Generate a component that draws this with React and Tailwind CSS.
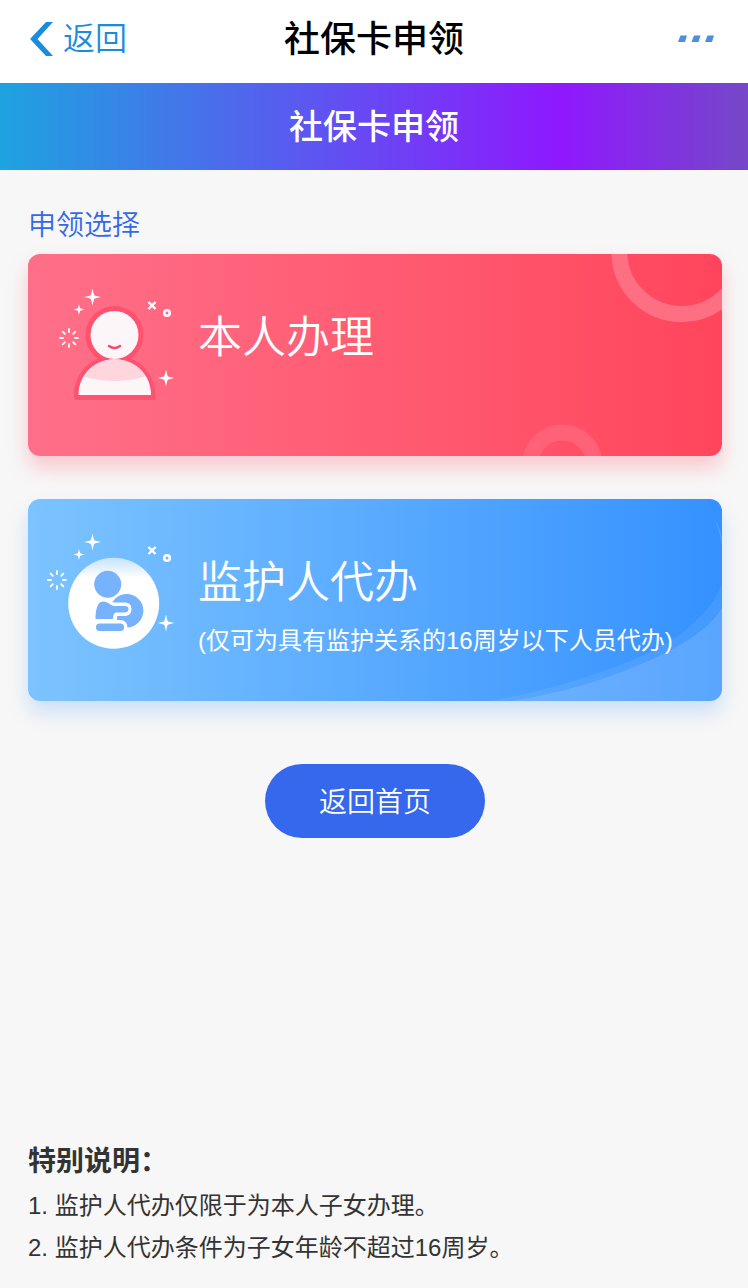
import React from 'react'

const notes = [
  '监护人代办仅限于为本人子女办理。',
  '监护人代办条件为子女年龄不超过16周岁。',
]

// Four-pointed star centred on (x, y)
function Star({ x, y, r }) {
  const k = r * 0.22
  return (
    <path
      transform={`translate(${x} ${y})`}
      d={`M0 ${-r} Q${k * 0.6} ${-k * 1.6} ${k} ${-k} Q${k * 1.6} ${-k * 0.6} ${r} 0 Q${k * 1.6} ${k * 0.6} ${k} ${k} Q${k * 0.6} ${k * 1.6} 0 ${r} Q${-k * 0.6} ${k * 1.6} ${-k} ${k} Q${-k * 1.6} ${k * 0.6} ${-r} 0 Q${-k * 1.6} ${-k * 0.6} ${-k} ${-k} Q${-k * 0.6} ${-k * 1.6} 0 ${-r}Z`}
      fill="#fff"
    />
  )
}

function Sparkles({ burstX, burstY }) {
  return (
    <g>
      <Star x={48.5} y={13} r={8.5} />
      <Star x={35} y={25.5} r={5.5} />
      <Star x={122} y={94} r={8.5} />
      <path d="M104.5 18l7 7M111.5 18l-7 7" stroke="#fff" strokeWidth="2.4" />
      <circle cx="123" cy="29" r="2.8" fill="none" stroke="#fff" strokeWidth="2.6" />
      <g stroke="#fff" strokeWidth="1.8" strokeLinecap="round">
        {[0, 45, 90, 135, 180, 225, 270, 315].map((deg) => (
          <path key={deg} transform={`translate(${burstX} ${burstY}) rotate(${deg})`} d="M0 -6V-9" />
        ))}
      </g>
    </g>
  )
}

function PersonIcon() {
  return (
    <svg viewBox="0 0 140 122" className="w-[140px] h-[122px] shrink-0" aria-hidden="true">
      <circle cx="70.5" cy="51" r="29" fill="#ff5170" />
      <path d="M30 112C30 88 48 71 70.5 71S111 88 111.5 112Q111.5 116 107.5 116H34Q30 116 30 112Z" fill="#ff5170" />
      <circle cx="70.5" cy="51" r="24" fill="#fdf6f8" />
      <path d="M34.5 111C34.5 90 51 75.3 70.7 75.3S107 90 107 111Z" fill="#fdf6f8" />
      <path d="M40.5 92.5C46 82 57 75.3 70.7 75.3S95.5 82 101 92.5Q71 101.5 40.5 92.5Z" fill="#ffd5de" />
      <path d="M65 62q5.5 4 11 0" fill="none" stroke="#f04f6b" strokeWidth="2.6" strokeLinecap="round" />
      <Sparkles burstX={25} burstY={54} />
    </svg>
  )
}

function GuardianIcon() {
  return (
    <svg viewBox="0 0 140 122" className="w-[140px] h-[122px] shrink-0" aria-hidden="true">
      <defs>
        <linearGradient id="disc" x1="0" y1="0" x2="0" y2="1">
          <stop offset="0" stopColor="#c4e2fd" />
          <stop offset="0.22" stopColor="#ffffff" />
        </linearGradient>
      </defs>
      <circle cx="69.7" cy="74.3" r="45.5" fill="url(#disc)" />
      <g fill="#76b3fc">
        <circle cx="82.7" cy="81.7" r="16.7" />
        <circle cx="63.7" cy="55.3" r="13.5" />
      </g>
      {/* white band separates the arm and the legs from the baby */}
      <g fill="#fff" stroke="#fff" strokeWidth="7" strokeLinejoin="round">
        <path d="M51.5 90C51.5 82 53 76 59 76C65 76 66 77 71 77H81Q84 77 84 80T81 83.5H72Q69.5 84 69.5 90Z" />
        <rect x="52" y="94.5" width="28" height="7.5" rx="3.5" />
      </g>
      <g fill="#76b3fc">
        <path d="M51.5 90C51.5 82 53 72.5 59 72.5C65 72.5 66 77 71 77H81Q84.5 77 84.5 80T81 83.5H72Q69 84 69 90Z" />
        <rect x="52" y="94.5" width="28" height="7.5" rx="3.5" />
      </g>
      <Sparkles burstX={13} burstY={51} />
    </svg>
  )
}

function RingDecor() {
  return (
    <svg viewBox="0 0 240 202" className="absolute right-0 top-0 h-full" fill="none" strokeWidth="16" aria-hidden="true">
      <circle cx="199.7" cy="-2.4" r="62.4" stroke="#ff6f83" />
      <circle cx="80.3" cy="210.6" r="32" stroke="#ff6177" />
    </svg>
  )
}

function WaveDecor() {
  return (
    <svg viewBox="0 0 240 202" className="absolute right-0 top-0 h-full" fill="#fff" aria-hidden="true">
      <path d="M8 202C60 193 110 178 155 159C196 142 226 117 240 86V202Z" fillOpacity="0.08" />
      <path d="M31 202C85 193 135 177 175 158C205 144 228 128 240 109V202Z" fillOpacity="0.12" />
      <path d="M233 21Q238 28 240 39V46Q238 33 233 21Z" fillOpacity="0.14" />
    </svg>
  )
}

function ChoiceCard({ className, icon, decor, title, hint }) {
  return (
    <button
      type="button"
      className={`relative flex w-full h-[202px] items-start overflow-hidden rounded-xl pl-4 pt-[30px] text-left text-white ${className}`}
    >
      {decor}
      {icon}
      <span className="relative ml-3.5 mt-[22px] flex flex-col">
        <span className="text-[44px] leading-[64px] font-[350]">{title}</span>
        {hint && <span className="mt-2 text-2xl leading-9 whitespace-nowrap">{hint}</span>}
      </span>
    </button>
  )
}

export default function App() {
  return (
    <div className="flex min-h-screen flex-col bg-[#f7f7f7] font-['Liberation_Sans','Noto_Sans_CJK_SC',sans-serif] text-[#333]">
      <header className="flex h-[83px] items-center bg-white px-[30px] pb-1.5">
        <div className="flex-1">
          <button type="button" className="flex items-center gap-2.5 text-[32px] leading-10 font-[350] text-[#1a8ce0]">
            <svg viewBox="0 0 23 34" className="w-[23px] h-[34px]" fill="currentColor" aria-hidden="true">
              <path d="M16 0H23L7.5 17L23 34H16L0.5 17.6V16.4Z" />
            </svg>
            返回
          </button>
        </div>
        <h1 className="pt-0.5 text-4xl font-medium text-black">社保卡申领</h1>
        <div className="flex flex-1 justify-end">
          <button type="button" aria-label="更多">
            <svg viewBox="0 0 40 8" className="w-10 h-2" fill="#4a90dc" aria-hidden="true">
              <path d="M2.5 0.5H9L7 7H0ZM16 0.5H22.5L20.5 7H13.500ZM29.500 0.5H36L34 7H27Z" />
            </svg>
          </button>
        </div>
      </header>

      <div className="flex h-[87px] items-center justify-center bg-[linear-gradient(to_right,#1ea3e0,#8f18fe_75%,#7548c8)] pt-0.5">
        <h2 className="text-[34px] font-medium text-white">社保卡申领</h2>
      </div>

      <main className="flex flex-col pl-7 pr-[26px] pt-[35px]">
        <h3 className="mb-[7px] text-[28px] leading-[42px] font-[350] text-[#3568e8]">申领选择</h3>
        <ChoiceCard
          className="bg-linear-to-r from-[#ff6f89] to-[#ff455c] shadow-[0_12px_20px_rgba(255,80,105,0.28)]"
          icon={<PersonIcon />}
          decor={<RingDecor />}
          title="本人办理"
        />
        <ChoiceCard
          className="mt-[43px] bg-linear-to-r from-[#7cc3ff] to-[#3491ff] shadow-[0_12px_20px_rgba(70,150,255,0.24)]"
          icon={<GuardianIcon />}
          decor={<WaveDecor />}
          title="监护人代办"
          hint="(仅可为具有监护关系的16周岁以下人员代办)"
        />
        <button
          type="button"
          className="mt-[63px] h-[74px] w-[220px] self-center rounded-full bg-[#3568ec] pt-1 text-[28px] font-[350] text-white"
        >
          返回首页
        </button>
      </main>

      <footer className="mt-auto px-7 pb-[19px]">
        <h4 className="mb-0.5 text-[28px] leading-[42px] font-bold">特别说明：</h4>
        <ol className="list-inside list-decimal text-2xl leading-[42px]">
          {notes.map((note) => (
            <li key={note}>{note}</li>
          ))}
        </ol>
      </footer>
    </div>
  )
}
